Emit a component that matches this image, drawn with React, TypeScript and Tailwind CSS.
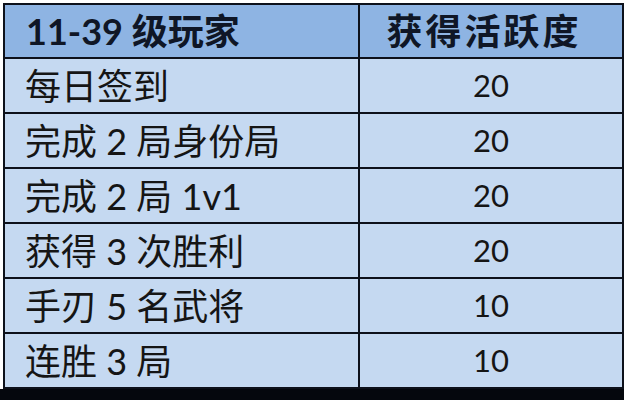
const rows = [
  { task: "每日签到", points: 20 },
  { task: "完成 2 局身份局", points: 20 },
  { task: "完成 2 局 1v1", points: 20 },
  { task: "获得 3 次胜利", points: 20 },
  { task: "手刃 5 名武将", points: 10 },
  { task: "连胜 3 局", points: 10 },
];

const font = "font-['Lato','Noto_Sans_CJK_SC',sans-serif]";

export default function App() {
  return (
    <div className={`w-[628px] h-[400px] bg-white overflow-hidden flex flex-col ${font}`}>
      <div className="ml-[3px] mt-[3px] w-[621px] border-x-2 border-t-2 border-[#0d111b] flex flex-col">
        {/* Header */}
        <div className="h-[54px] flex border-b-2 border-[#0d111b] bg-[#8eb4e3]">
          <div className="w-[355px] border-r-2 border-[#0d111b] flex items-center pl-[21px] text-[36px] font-bold text-[#0f1626] leading-none">
            11-39 级玩家
          </div>
          <div className="flex-1 flex items-center justify-center pr-[14px] text-[36px] font-bold text-[#0f1626] leading-none tracking-[3px]">
            获得活跃度
          </div>
        </div>

        {/* Body */}
        {rows.map((row, i) => (
          <div key={i} className="h-[55px] flex border-b-2 border-[#0d111b] bg-[#c5d9f1]">
            <div className="w-[355px] border-r-2 border-[#0d111b] flex items-center pl-[20px] text-[36px] text-[#151515] leading-none">
              {row.task}
            </div>
            <div className="flex-1 flex items-center justify-center text-[31px] text-[#151515] leading-none">
              {row.points}
            </div>
          </div>
        ))}
      </div>
      <div className="w-[624px] flex-1 bg-[#05070d]" />
    </div>
  );
}
